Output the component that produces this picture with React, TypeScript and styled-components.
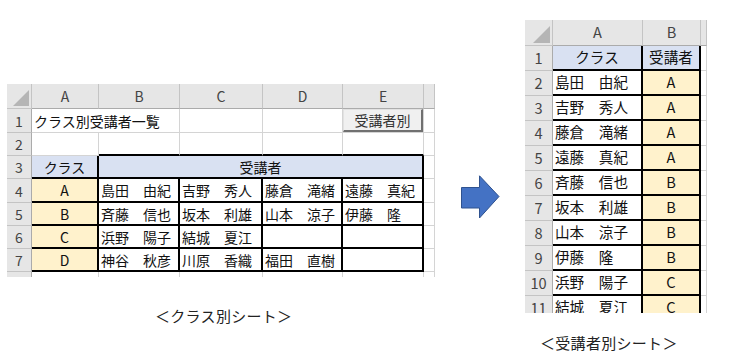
import styled, { createGlobalStyle } from 'styled-components'

const GlobalStyle = createGlobalStyle`
  html, body {
    margin: 0;
    padding: 0;
    background: #fff;
  }
  body {
    font-family: "Noto Sans CJK JP", "Noto Sans", sans-serif;
  }
`

const GRID = '#d4d4d4'
const HEAD_BG = '#e6e6e6'
const HEAD_LINE = '#c4c4c4'
const BLUE = '#d9e1f2'
const CREAM = '#fff2cc'

type Line = 'grid' | 'bold' | 'none'

const line = (l?: Line) =>
  l === 'bold' ? '2px solid #000' : l === 'none' ? '0' : `1px solid ${GRID}`

const Page = styled.div`
  display: flex;
  align-items: flex-start;
  width: 745px;
  height: 361px;
  overflow: hidden;
  background: #fff;
`

const Panel = styled.section<{ $top: number; $left: number }>`
  display: flex;
  flex-direction: column;
  margin-top: ${p => p.$top}px;
  margin-left: ${p => p.$left}px;
`

const Sheet = styled.div<{ $cols: string; $rows: string; $fs: number; $height: number }>`
  display: grid;
  grid-template-columns: ${p => p.$cols};
  grid-template-rows: ${p => p.$rows};
  height: ${p => p.$height}px;
  overflow: hidden;
  font-size: ${p => p.$fs}px;
  line-height: 1;
`

const Corner = styled.div`
  box-sizing: border-box;
  display: flex;
  align-items: flex-end;
  justify-content: flex-end;
  padding: 0 2px 2px 0;
  background: ${HEAD_BG};
  border-right: 1px solid ${HEAD_LINE};
  border-bottom: 1px solid ${HEAD_LINE};
`

const Tri = styled.span<{ $size: number }>`
  width: ${p => p.$size}px;
  height: ${p => p.$size}px;
  background: #b5b5b5;
  clip-path: polygon(100% 0, 100% 100%, 0 100%);
`

const ColHead = styled.div`
  box-sizing: border-box;
  display: flex;
  align-items: center;
  justify-content: center;
  background: ${HEAD_BG};
  color: #444;
  border-right: 1px solid ${HEAD_LINE};
  border-bottom: 1px solid #ababab;
`

const RowHead = styled.div`
  box-sizing: border-box;
  display: flex;
  align-items: center;
  justify-content: center;
  background: ${HEAD_BG};
  color: #444;
  border-right: 1px solid #ababab;
  border-bottom: 1px solid ${HEAD_LINE};
`

const Cell = styled.div<{
  $fill?: string
  $right?: Line
  $bottom?: Line
  $center?: boolean
  $span?: number
}>`
  box-sizing: border-box;
  display: flex;
  align-items: center;
  justify-content: ${p => (p.$center ? 'center' : 'flex-start')};
  padding: 0 2px;
  grid-column: span ${p => p.$span ?? 1};
  background: ${p => p.$fill ?? '#fff'};
  border-right: ${p => line(p.$right)};
  border-bottom: ${p => line(p.$bottom)};
  color: #111;
  white-space: nowrap;
  overflow: hidden;
`

const ButtonCell = styled(Cell)`
  padding: 0;
`

const SheetButton = styled.button`
  box-sizing: border-box;
  width: 100%;
  height: 100%;
  padding: 0;
  background: #f0f0f0;
  border: 1px solid #e2e2e2;
  border-right: 2px solid #707070;
  border-bottom: 2px solid #707070;
  font: inherit;
  color: #333;
`

const Caption = styled.p<{ $gap: number; $indent: number }>`
  margin: ${p => p.$gap}px 0 0 ${p => p.$indent}px;
  font-size: 15px;
  line-height: 20px;
  letter-spacing: 0.3px;
  color: #222;
  white-space: nowrap;
`

const Arrow = styled.svg`
  flex: none;
  margin-top: 175px;
  margin-left: 26px;
`

const classRows = [
  { cls: 'A', names: ['島田　由紀', '吉野　秀人', '藤倉　滝緒', '遠藤　真紀'] },
  { cls: 'B', names: ['斉藤　信也', '坂本　利雄', '山本　涼子', '伊藤　隆'] },
  { cls: 'C', names: ['浜野　陽子', '結城　夏江', '', ''] },
  { cls: 'D', names: ['神谷　秋彦', '川原　香織', '福田　直樹', ''] },
]

const students = [
  ['島田　由紀', 'A'],
  ['吉野　秀人', 'A'],
  ['藤倉　滝緒', 'A'],
  ['遠藤　真紀', 'A'],
  ['斉藤　信也', 'B'],
  ['坂本　利雄', 'B'],
  ['山本　涼子', 'B'],
  ['伊藤　隆', 'B'],
  ['浜野　陽子', 'C'],
  ['結城　夏江', 'C'],
]

function ClassSheet() {
  return (
    <Sheet
      $cols="25px 67px 81px 83px 80px 81px 11px"
      $rows="25px 24px 23px 23px 24px 23px 23px 23px 24px"
      $fs={14}
      $height={193}
    >
      <Corner>
        <Tri $size={16} />
      </Corner>
      {['A', 'B', 'C', 'D', 'E', ''].map((c, i) => (
        <ColHead key={i}>{c}</ColHead>
      ))}

      <RowHead>1</RowHead>
      <Cell $span={2}>クラス別受講者一覧</Cell>
      <Cell />
      <Cell />
      <ButtonCell>
        <SheetButton>受講者別</SheetButton>
      </ButtonCell>
      <Cell />

      <RowHead>2</RowHead>
      <Cell />
      <Cell $bottom="bold" />
      <Cell $bottom="bold" />
      <Cell $bottom="bold" />
      <Cell $bottom="bold" />
      <Cell />

      <RowHead>3</RowHead>
      <Cell $fill={BLUE} $center $right="bold" $bottom="bold">
        クラス
      </Cell>
      <Cell $fill={BLUE} $center $span={4} $right="bold" $bottom="bold">
        受講者
      </Cell>
      <Cell />

      {classRows.map((r, i) => (
        <Row key={r.cls} n={i + 4} cls={r.cls} names={r.names} />
      ))}

      {/* row 8 only peeks out below the table */}
      <RowHead />
      {[0, 1, 2, 3, 4, 5].map(i => (
        <Cell key={i} />
      ))}
    </Sheet>
  )
}

function Row({ n, cls, names }: { n: number; cls: string; names: string[] }) {
  return (
    <>
      <RowHead>{n}</RowHead>
      <Cell $fill={CREAM} $center $right="bold" $bottom="bold">
        {cls}
      </Cell>
      {names.map((name, i) => (
        <Cell key={i} $right="bold" $bottom="bold">
          {name}
        </Cell>
      ))}
      <Cell />
    </>
  )
}

function StudentSheet() {
  return (
    <Sheet
      $cols="28px 90px 58px 6px"
      $rows="26px repeat(11, 25px)"
      $fs={14.6}
      $height={293}
    >
      <Corner>
        <Tri $size={17} />
      </Corner>
      <ColHead>A</ColHead>
      <ColHead>B</ColHead>
      <ColHead />

      <RowHead>1</RowHead>
      <Cell $fill={BLUE} $center $right="bold" $bottom="bold">
        クラス
      </Cell>
      <Cell $fill={BLUE} $center $right="bold" $bottom="bold">
        受講者
      </Cell>
      <Cell />

      {students.map(([name, cls], i) => (
        <StudentRow key={name} n={i + 2} name={name} cls={cls} />
      ))}
    </Sheet>
  )
}

function StudentRow({ n, name, cls }: { n: number; name: string; cls: string }) {
  return (
    <>
      <RowHead>{n}</RowHead>
      <Cell $right="bold" $bottom="bold">
        {name}
      </Cell>
      <Cell $fill={CREAM} $center $right="bold" $bottom="bold">
        {cls}
      </Cell>
      <Cell />
    </>
  )
}

export default function App() {
  return (
    <>
      <GlobalStyle />
      <Page>
        <Panel $top={84} $left={7}>
          <ClassSheet />
          <Caption $gap={29} $indent={148}>
            ＜クラス別シート＞
          </Caption>
        </Panel>

        <Arrow width="39" height="44" viewBox="0 0 39 44">
          <polygon
            points="0.5,12.5 18.5,12.5 18.5,0.8 38,21.5 18.5,43 18.5,33 0.5,33"
            fill="#4472c4"
            stroke="#2f528f"
            strokeWidth="1"
          />
        </Arrow>

        <Panel $top={20} $left={25}>
          <StudentSheet />
          <Caption $gap={20} $indent={15}>
            ＜受講者別シート＞
          </Caption>
        </Panel>
      </Page>
    </>
  )
}
